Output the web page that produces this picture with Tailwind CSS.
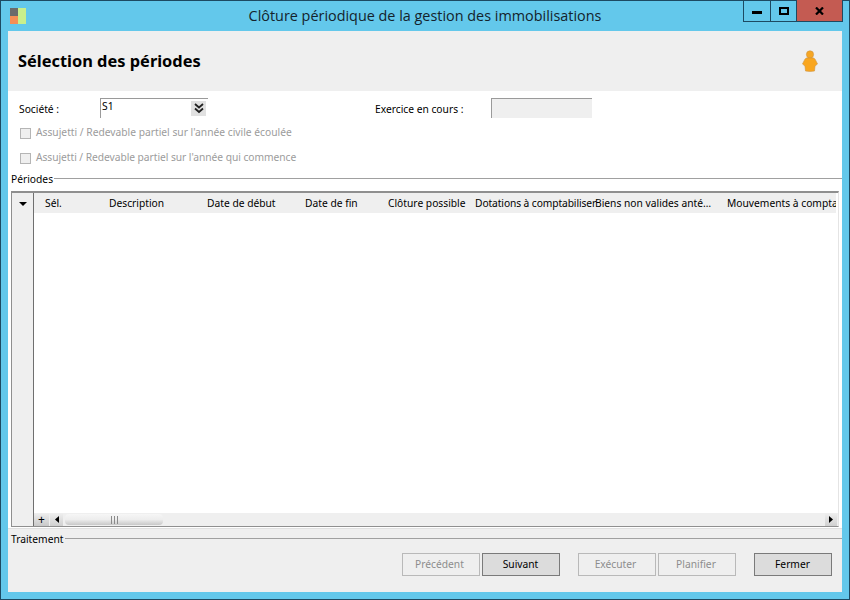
<!DOCTYPE html>
<html lang="fr">
<head>
<meta charset="UTF-8">
<title>Clôture périodique</title>
<script src="https://cdn.jsdelivr.net/npm/@tailwindcss/browser@4"></script>
</head>
<body class="w-[850px] h-[600px] overflow-hidden bg-[#63c8eb] font-['Noto_Sans',sans-serif] text-[10.25px] text-black">
<div class="relative w-[850px] h-[600px] border border-[#1d4a62] flex flex-col">
  <!-- title bar -->
  <div class="relative h-[30px] flex items-center justify-center shrink-0 px-[7px]">
    <svg class="absolute left-[9px] top-[6px]" width="17" height="17" viewBox="0 0 17 17">
      <rect x="0" y="1" width="8" height="8" fill="#6b6b6b"/>
      <rect x="0" y="9" width="8" height="8" fill="#f58f55"/>
      <rect x="8" y="1" width="8" height="16" fill="#c9ef8c"/>
    </svg>
    <span class="text-[14.4px] text-[#14232c] font-['Open_Sans',sans-serif] leading-none">Clôture périodique de la gestion des immobilisations</span>
    <div class="absolute right-[6px] top-[-1px] h-[22px] flex border border-t-0 border-[#1d4a62]">
      <div class="w-[27px] border-r border-[#1d4a62] flex items-center justify-center"><div class="w-[10px] h-[3px] bg-black mt-[4px]"></div></div>
      <div class="w-[26px] border-r border-[#1d4a62] flex items-center justify-center"><div class="w-[10px] h-[8px] border-2 border-black"></div></div>
      <div class="w-[45px] bg-[#c45b52] flex items-center justify-center">
        <svg width="9" height="8" viewBox="0 0 9 8"><path d="M1 0.5 L8 7.5 M8 0.5 L1 7.5" stroke="#000" stroke-width="2.2"/></svg>
      </div>
    </div>
  </div>

  <!-- client area -->
  <div class="mx-[7px] w-[834px] h-[561px] bg-white flex flex-col">
    <div class="h-[60px] bg-[#efefef] flex items-center justify-between pl-[10px] pr-[24px] shrink-0">
      <h1 class="font-bold text-[16.4px] leading-none">Sélection des périodes</h1>
      <svg width="16" height="22" viewBox="0 0 16 22">
        <ellipse cx="8" cy="4.5" rx="3.6" ry="3.7" fill="#f6a623" stroke="#cf9440" stroke-width="0.6"/>
        <path d="M4.5 8 H11.5 C13 8.5 13.5 10 14 11 L15.5 14 L13 16 L12.5 21 C10 21.5 6 21.5 3.5 21 L3 16 L0.5 14 L2 11 C2.5 10 3 8.5 4.5 8 Z" fill="#f9a61f" stroke="#cf9440" stroke-width="0.6"/>
      </svg>
    </div>

    <div class="flex h-[21px] mt-[7px] shrink-0">
      <span class="w-[92px] pl-[11px] pt-[4px] leading-[14px]">Société :</span>
      <div class="relative w-[108px] h-[20px] border-t border-l border-[#9a9a9a] pl-[1px] leading-[15px]">S1
        <div class="absolute right-[2px] top-[2px] w-[15px] h-[15px] bg-[#e1e1e1] flex items-center justify-center">
          <svg width="10" height="11" viewBox="0 0 10 11"><path d="M1 1 L5 4.5 L9 1 M1 5.5 L5 9 L9 5.5" fill="none" stroke="#222" stroke-width="1.8"/></svg>
        </div>
      </div>
      <span class="ml-[167px] w-[116px] pt-[4px] leading-[14px]">Exercice en cours :</span>
      <div class="w-[101px] h-[20px] bg-[#efefef] border-t border-l border-[#9a9a9a]"></div>
    </div>

    <label class="flex items-center h-[14px] mt-[7px] ml-[12px] text-[#9c9c9c] shrink-0">
      <span class="w-[11px] h-[11px] border border-[#b5b5b5] bg-[#efefef] mr-[5px]"></span>Assujetti / Redevable partiel sur l'année civile écoulée
    </label>
    <label class="flex items-center h-[14px] mt-[11px] ml-[12px] text-[#9c9c9c] shrink-0">
      <span class="w-[11px] h-[11px] border border-[#b5b5b5] bg-[#efefef] mr-[5px]"></span><span class="tracking-[-0.05px]">Assujetti / Redevable partiel sur l'année qui commence</span>
    </label>

    <div class="flex items-center h-[14px] mt-[6px] ml-[3px] shrink-0">
      <span class="pr-[1px] pt-[4px]">Périodes</span><div class="flex-1 h-px bg-[#a0a0a0]"></div>
    </div>

    <!-- grid -->
    <div class="ml-[3px] w-[828px] h-[336px] mt-[6px] border-t-2 border-l border-r border-b border-[#8f8f8f] border-r-[#e4e4e4] flex shrink-0">
      <div class="w-[22px] bg-[#efefef] border-r border-[#6f6f6f] flex flex-col items-center shrink-0">
        <svg class="mt-[9px]" width="8" height="4" viewBox="0 0 8 4"><path d="M0 0 H8 L4 4 Z" fill="#000"/></svg>
      </div>
      <div class="flex-1 flex flex-col min-w-0">
        <div class="h-[20px] pt-[2px] bg-[#efefef] flex items-center whitespace-nowrap overflow-hidden shrink-0 mr-[2px]">
          <span class="w-[64px] pl-[11px] shrink-0">Sél.</span>
          <span class="w-[98px] pl-[11px] shrink-0">Description</span>
          <span class="w-[98px] pl-[11px] shrink-0">Date de début</span>
          <span class="w-[83px] pl-[11px] shrink-0">Date de fin</span>
          <span class="w-[88px] shrink-0 pl-[11px]">Clôture possible</span>
          <span class="w-[130px] pl-[10px] shrink-0 tracking-[-0.1px]">Dotations à comptabiliser</span>
          <span class="w-[132px] shrink-0">Biens non valides anté…</span>
          <span class="shrink-0">Mouvements à compta</span>
        </div>
        <div class="flex-1 bg-white"></div>
        <div class="h-[13px] bg-[#efefef] flex items-center shrink-0">
          <div class="w-[15px] h-[13px] bg-gradient-to-b from-[#efefef] to-[#c9c9c9] flex items-center justify-center text-[12px] leading-none">+</div>
          <div class="ml-[1px] w-[13px] h-[13px] bg-gradient-to-b from-[#efefef] to-[#d0d0d0] flex items-center justify-center">
            <svg width="4" height="7" viewBox="0 0 4 7"><path d="M4 0 V7 L0 3.5 Z" fill="#000"/></svg>
          </div>
          <div class="relative ml-[2px] w-[98px] h-[11px] rounded-[4px] bg-gradient-to-b from-[#f6f6f6] via-[#ededed] to-[#c8c8c8] flex items-center justify-center">
            <div class="w-[7px] h-[8px] border-x border-[#8a8a8a] flex justify-center"><div class="w-px h-full bg-[#8a8a8a]"></div></div>
          </div>
          <div class="ml-auto w-[12px] h-[13px] bg-gradient-to-b from-[#efefef] to-[#d0d0d0] flex items-center justify-center mr-[1px]">
            <svg width="4" height="7" viewBox="0 0 4 7"><path d="M0 0 V7 L4 3.5 Z" fill="#000"/></svg>
          </div>
        </div>
      </div>
    </div>

    <!-- footer -->
    <div class="flex-1 mt-[1px] border-t border-[#e0e0e0] bg-[#efefef] flex flex-col">
      <div class="flex items-center h-[14px] mt-[2px] ml-[3px]">
        <span class="pr-[1px] pt-[4px]">Traitement</span><div class="flex-1 h-px bg-[#a0a0a0]"></div>
      </div>
      <div class="flex mt-[8px] pl-[394px]">
        <button class="w-[78px] h-[23px] pr-[3px] border border-[#b9b9b9] text-[#8d8d8d] bg-[#efefef]">Précédent</button>
        <button class="ml-[2px] w-[78px] h-[23px] pr-[1px] border border-[#7a7a7a] bg-[#dcdcdc]">Suivant</button>
        <button class="ml-[18px] w-[78px] h-[23px] pr-[3px] border border-[#b9b9b9] text-[#8d8d8d] bg-[#efefef]">Exécuter</button>
        <button class="ml-[2px] w-[78px] h-[23px] pr-[2px] border border-[#b9b9b9] text-[#8d8d8d] bg-[#efefef]">Planifier</button>
        <button class="ml-[18px] w-[78px] h-[23px] pr-[1px] border border-[#7a7a7a] bg-[#dcdcdc]">Fermer</button>
      </div>
    </div>
  </div>
</div>
</body>
</html>
